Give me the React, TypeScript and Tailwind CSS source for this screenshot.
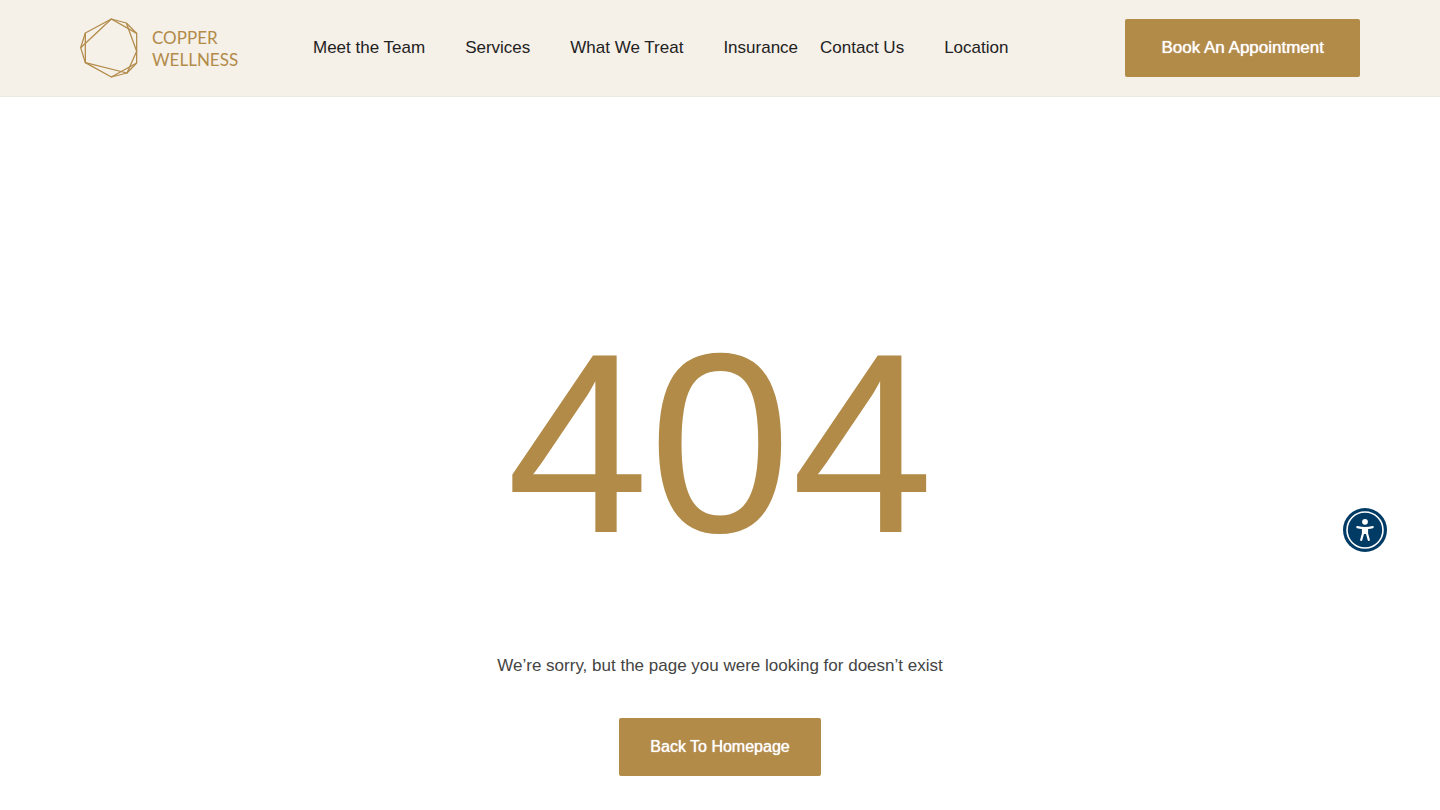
const mainLinks = ["Meet the Team", "Services", "What We Treat", "Insurance"];
const contactLinks = ["Contact Us", "Location"];

const Logo = () => {
  return (
    <a
      href="#"
      className="flex w-40 shrink-0 items-center gap-3.5 text-[#b28b49]"
    >
      <svg
        viewBox="29 30 174 180"
        className="h-15 w-[58px] shrink-0"
        fill="none"
        stroke="currentColor"
        strokeWidth="3.8"
        strokeLinejoin="round"
        aria-hidden="true"
      >
        <path d="M123 33 45 75V164L123 207 199 165V76Z" />
        <path d="M123 33 31 119 45 164 170 195 199 130 168 45Z" />
        <path d="M45 75 31 119M168 45 199 76M199 165 170 195 123 207" />
      </svg>
      <span className="pt-0.5 font-[Lato,sans-serif] text-[17px] leading-[22px]">
        COPPER
        <br />
        WELLNESS
      </span>
    </a>
  );
};

const NavLinks = ({ links }: { links: string[] }) => {
  return (
    <ul className="flex gap-10">
      {links.map((link) => (
        <li key={link}>
          <a href="#" className="whitespace-nowrap text-[#222222]">
            {link}
          </a>
        </li>
      ))}
    </ul>
  );
};

const Header = () => {
  return (
    <header className="flex h-[97px] items-center border-b border-[#ece9e2] bg-[#f5f0e8] px-20">
      <Logo />
      <nav className="ml-[73px] flex gap-[22px] text-[17px] leading-6">
        <NavLinks links={mainLinks} />
        <NavLinks links={contactLinks} />
      </nav>
      <a
        href="#"
        className="ml-auto rounded-xs bg-[#b28b49] px-9 py-[17px] text-[17px] leading-6 whitespace-nowrap text-white text-shadow-[0_0_1px_#fff]"
      >
        Book An Appointment
      </a>
    </header>
  );
};

const NotFound = () => {
  return (
    <main className="flex flex-col items-center px-6 pt-[218px] pb-8 text-center">
      <h1 className="text-[256px] leading-[256px] text-[#b28b49]">404</h1>
      <p className="mt-[83px] text-[17px] leading-6 text-[#444444]">
        We’re sorry, but the page you were looking for doesn’t exist
      </p>
      <a
        href="#"
        className="mt-10 rounded-xs bg-[#b28b49] px-[31px] py-[17px] text-base leading-6 text-white text-shadow-[0_0_1px_#fff]"
      >
        Back To Homepage
      </a>
    </main>
  );
};

const AccessibilityButton = () => {
  return (
    <button
      type="button"
      aria-label="Accessibility menu"
      className="fixed right-[53px] bottom-[258px] size-11"
    >
      <svg viewBox="0 0 44 44" className="size-full" aria-hidden="true">
        <circle cx="22" cy="22" r="22" fill="#003b65" />
        <circle cx="22" cy="22" r="18" fill="none" stroke="#fff" strokeWidth="1.6" />
        <circle cx="22" cy="13.8" r="2.9" fill="#fff" />
        <path
          d="M14.3 19.1c5 1.3 10.4 1.3 15.4 0M20 21v4.5l-1.8 6.5M24 21v4.5l1.8 6.5"
          fill="none"
          stroke="#fff"
          strokeWidth="2.2"
          strokeLinecap="round"
          strokeLinejoin="round"
        />
        <path d="M19 19.5h6v6.5h-6z" fill="#fff" />
      </svg>
    </button>
  );
};

export default function App() {
  return (
    <div className="min-h-screen bg-white font-['Liberation_Sans',Arial,sans-serif]">
      <Header />
      <NotFound />
      <AccessibilityButton />
    </div>
  );
}
